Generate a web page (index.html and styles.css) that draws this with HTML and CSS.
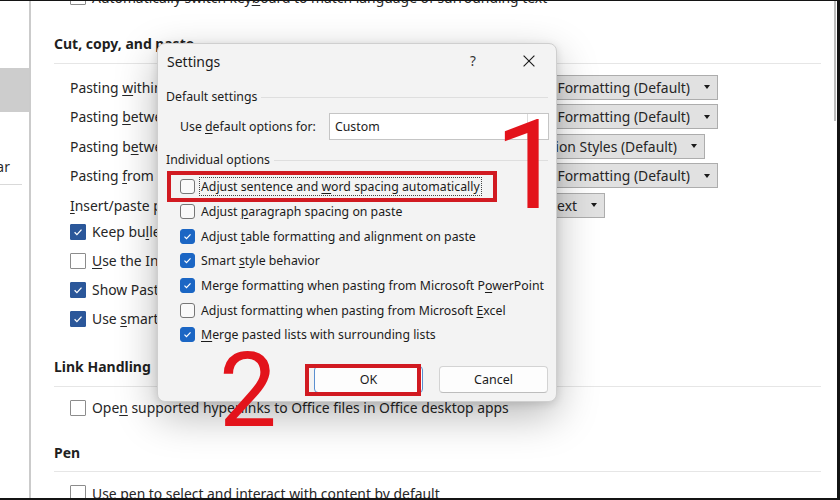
FILE: index.html
```html
<!DOCTYPE html>
<html lang="en">
<head>
<meta charset="utf-8">
<title>Word Options - Advanced</title>
<link rel="stylesheet" href="styles.css">
</head>
<body>
<div class="screen">
  <nav class="nav">
    <div class="nav-list">
      <div class="nav-item">Language</div>
      <div class="nav-item">Accessibility</div>
      <div class="nav-item is-selected">Advanced</div>
      <div class="nav-item">Customize Ribbon</div>
      <div class="nav-item">Quick Access Toolbar</div>
      <div class="nav-sep"></div>
      <div class="nav-item">Add-ins</div>
      <div class="nav-item">Trust Center</div>
    </div>
  </nav>

  <main class="pane">
    <div class="pane-body">
      <div class="check-row"><span class="cb"></span><span class="check-text">Automatically switch key<u>b</u>oard to match language of surrounding text</span></div>

      <section class="sec sec-cut">
        <h2 class="sec-title">Cut, copy, and paste</h2>
        <div class="sec-body sec-body-dd">
          <div class="dd-row"><span class="dd-label">Pasting <u>w</u>ithin the same document:</span><span class="dd dd-wide"><span>Keep Source Formatting (Default)</span><span class="dd-arrow"></span></span></div>
          <div class="dd-row"><span class="dd-label">Pasting <u>b</u>etween documents:</span><span class="dd dd-wide"><span>Keep Source Formatting (Default)</span><span class="dd-arrow"></span></span></div>
          <div class="dd-row"><span class="dd-label">Pasting b<u>e</u>tween documents when style definitions conflict:</span><span class="dd dd-mid"><span>Use Destination Styles (Default)</span><span class="dd-arrow"></span></span></div>
          <div class="dd-row"><span class="dd-label">Pasting <u>f</u>rom other programs:</span><span class="dd dd-wide"><span>Keep Source Formatting (Default)</span><span class="dd-arrow"></span></span></div>
          <div class="dd-row"><span class="dd-label"><u>I</u>nsert/paste pictures as:</span><span class="dd dd-narrow"><span>In line with text</span><span class="dd-arrow"></span></span></div>
          <div class="check-list">
            <div class="check-row"><span class="cb on"><svg viewBox="0 0 12 12"><path d="M2.6 6.3l2.3 2.3 4.6-5" /></svg></span><span class="check-text clip">Keep bu<u>l</u>lets and numbers when pasting text with Keep Text Only option</span></div>
            <div class="check-row"><span class="cb"></span><span class="check-text"><u>U</u>se the Insert key for paste</span></div>
            <div class="check-row"><span class="cb on"><svg viewBox="0 0 12 12"><path d="M2.6 6.3l2.3 2.3 4.6-5" /></svg></span><span class="check-text">Show Paste <u>O</u>ptions button when content is pasted</span></div>
            <div class="check-row"><span class="cb on"><svg viewBox="0 0 12 12"><path d="M2.6 6.3l2.3 2.3 4.6-5" /></svg></span><span class="check-text">Use <u>s</u>mart cut and paste</span><span class="btn-small">Settings...</span></div>
          </div>
        </div>
      </section>

      <section class="sec sec-link">
        <h2 class="sec-title">Link Handling</h2>
        <div class="sec-body">
          <div class="check-row"><span class="cb"></span><span class="check-text">Ope<u>n</u> supported hyperlinks to Office files in Office desktop apps</span></div>
        </div>
      </section>

      <section class="sec sec-pen">
        <h2 class="sec-title">Pen</h2>
        <div class="sec-body">
          <div class="check-row"><span class="cb"></span><span class="check-text">Use pen to select and interact with content by default</span></div>
        </div>
      </section>
    </div>
  </main>

  <div class="scrollbar"><div class="scroll-thumb"></div></div>

  <div class="dialog" role="dialog" aria-label="Settings">
    <div class="dlg-titlebar">
      <span class="dlg-title">Settings</span>
      <span class="dlg-help">?</span>
      <span class="dlg-close"><svg width="12" height="12" viewBox="0 0 12 12"><path d="M.6.6l10.8 10.8M11.4.6L.6 11.4" /></svg></span>
    </div>
    <div class="dlg-body">
      <div class="group-label">Default settings</div>
      <div class="combo-row">
        <span>Use <u>d</u>efault options for:</span>
        <span class="combo"><span class="combo-text">Custom</span><span class="combo-btn"></span></span>
      </div>
      <div class="group-label group-label-2">Individual options</div>
      <div class="opt-list">
        <div class="opt"><span class="dcb"></span><span class="focus-ring">Adjust sentence and <u>w</u>ord spacing automatically</span></div>
        <div class="opt"><span class="dcb"></span><span>Adjust <u>p</u>aragraph spacing on paste</span></div>
        <div class="opt"><span class="dcb on"><svg viewBox="0 0 12 12"><path d="M2.7 6.2l2.2 2.2 4.4-4.8" /></svg></span><span>Adjust <u>t</u>able formatting and alignment on paste</span></div>
        <div class="opt"><span class="dcb on"><svg viewBox="0 0 12 12"><path d="M2.7 6.2l2.2 2.2 4.4-4.8" /></svg></span><span>Smart <u>s</u>tyle behavior</span></div>
        <div class="opt"><span class="dcb on"><svg viewBox="0 0 12 12"><path d="M2.7 6.2l2.2 2.2 4.4-4.8" /></svg></span><span>Merge formatting when pasting from Microsoft P<u>o</u>werPoint</span></div>
        <div class="opt"><span class="dcb"></span><span>Adjust formatting when pasting from Microsoft <u>E</u>xcel</span></div>
        <div class="opt"><span class="dcb on"><svg viewBox="0 0 12 12"><path d="M2.7 6.2l2.2 2.2 4.4-4.8" /></svg></span><span><u>M</u>erge pasted lists with surrounding lists</span></div>
      </div>
      <div class="dlg-actions">
        <button class="btn btn-default" type="button">OK</button>
        <button class="btn" type="button">Cancel</button>
      </div>
    </div>
  </div>

  <div class="anno-box anno-box-1"></div>
  <div class="anno-box anno-box-2"></div>
  <div class="anno-num anno-num-1">1</div>
  <div class="anno-num anno-num-2">2</div>
</div>
</body>
</html>
```

FILE: styles.css
```css
html, body {
  margin: 0;
  padding: 0;
  background: #fff;
}

.screen {
  width: 840px;
  height: 500px;
  box-sizing: border-box;
  border-top: 1px solid #141414;
  border-right: 3px solid #141414;
  border-bottom: 2px solid #141414;
  display: flex;
  position: relative;
  overflow: hidden;
  background: #fff;
  font-family: "Noto Sans", "Liberation Sans", sans-serif;
  font-size: 13.9px;
  color: #262626;
}

u { text-decoration-thickness: 1px; text-underline-offset: 2px; }

/* left navigation */
.nav {
  width: 29px;
  flex-shrink: 0;
  border-right: 2px solid #cbcbcb;
  overflow: hidden;
}
.nav-list {
  margin-left: -127px;
  margin-top: -5px;
  width: calc(100% + 127px);
}
.nav-item {
  height: 36px;
  display: flex;
  align-items: center;
  white-space: nowrap;
  color: #2b2b2b;
}
.nav-item.is-selected {
  height: 44px;
  background: #cdcdcd;
}
.nav-sep {
  width: 149px;
  height: 1px;
  background: #d9d9d9;
}

/* main pane */
.pane {
  flex: 1;
  overflow: hidden;
}
.pane-body {
  margin-top: -18.5px;
  padding: 0 10px 0 23px;
}

.check-row {
  height: 29px;
  display: flex;
  align-items: center;
  padding-left: 16px;
  white-space: nowrap;
}
.check-text.clip {
  max-width: 440px;
  overflow: hidden;
}
.cb {
  width: 16px;
  height: 16px;
  box-sizing: border-box;
  border: 1px solid #8c8c8c;
  border-radius: 1px;
  background: #fff;
  margin-right: 6px;
  flex-shrink: 0;
  display: flex;
  align-items: center;
  justify-content: center;
}
.cb.on {
  background: #2b579a;
  border-color: #2b579a;
}
.cb svg { width: 12px; height: 12px; }
.cb path, .dcb path {
  fill: none;
  stroke: #fff;
  stroke-width: 1.3;
}

.btn-small {
  margin-left: 14px;
  height: 22px;
  padding: 0 10px;
  display: inline-flex;
  align-items: center;
  border: 1px solid #adadad;
  background: #e1e1e1;
}

.sec-title {
  margin: 0;
  font-size: 14px;
  font-weight: 700;
  line-height: 20px;
  padding-bottom: 8.5px;
  border-bottom: 1px solid #e6e6e6;
  color: #1f1f1f;
}
.sec-cut .sec-title { margin-top: 22.5px; }
.sec-link .sec-title { margin-top: 24px; }
.sec-pen .sec-title { margin-top: 20.6px; }

.sec-body { padding-top: 6.5px; }
.sec-body-dd { padding-top: 8.75px; }

.dd-row {
  height: 29.5px;
  display: flex;
  align-items: center;
  padding-left: 16px;
}
.dd-label {
  width: 408px;
  flex-shrink: 0;
  white-space: nowrap;
  overflow: hidden;
}
.dd {
  height: 25px;
  box-sizing: border-box;
  border: 1px solid #adadad;
  background: #e1e1e1;
  display: flex;
  align-items: center;
  justify-content: flex-end;
  padding-right: 7px;
  overflow: hidden;
  white-space: nowrap;
  color: #262626;
}
.dd-wide { width: 240px; }
.dd-mid { width: 227px; }
.dd-narrow { width: 127px; }
.dd-arrow {
  width: 0;
  height: 0;
  border-left: 3.5px solid transparent;
  border-right: 3.5px solid transparent;
  border-top: 4px solid #1a1a1a;
  margin-left: 14px;
  flex-shrink: 0;
}

.check-list { margin-top: -2.5px; }

/* scrollbar */
.scrollbar {
  width: 6px;
  flex-shrink: 0;
}
.scroll-thumb {
  margin-left: 3px;
  width: 2px;
  height: 120px;
  background: #bdbdbd;
}

/* dialog */
.dialog {
  position: absolute;
  left: 157px;
  top: 42px;
  width: 400px;
  height: 359px;
  box-sizing: border-box;
  border: 1px solid #cfcfcf;
  border-radius: 8px;
  background: #f3f3f3;
  box-shadow: 0 14px 42px rgba(0, 0, 0, 0.28), 0 2px 8px rgba(0, 0, 0, 0.12);
  font-size: 12.3px;
  color: #1b1b1b;
}
.dlg-titlebar {
  height: 34px;
  display: flex;
  align-items: center;
  padding: 0 4px 0 9px;
}
.dlg-title {
  flex: 1;
  font-size: 14px;
}
.dlg-help {
  width: 46px;
  margin-right: 10px;
  text-align: center;
  font-size: 13.5px;
  color: #333;
}
.dlg-close {
  width: 46px;
  display: flex;
  justify-content: center;
}
.dlg-close path {
  stroke: #1b1b1b;
  stroke-width: 1.15;
  fill: none;
}

.dlg-body { padding: 0 8px; }

.group-label {
  display: flex;
  align-items: center;
  line-height: 20px;
  margin-top: 9px;
}
.group-label::after {
  content: "";
  flex: 1;
  height: 1px;
  background: #dedede;
  margin-left: 4px;
}
.group-label-2 { margin-top: 10px; }

.combo-row {
  margin-top: 6px;
  margin-right: -1px;
  height: 27px;
  display: flex;
  align-items: center;
  justify-content: space-between;
  padding-left: 14px;
}
.combo {
  width: 220px;
  height: 27px;
  box-sizing: border-box;
  border: 1px solid #c5c5c5;
  background: #fff;
  display: flex;
  align-items: center;
}
.combo-text {
  flex: 1;
  padding-left: 5px;
}
.combo-btn {
  width: 20px;
  height: 100%;
  border-left: 1px solid #dcdcdc;
}

.opt-list { margin-top: 4.4px; }
.opt {
  height: 24.67px;
  display: flex;
  align-items: center;
  padding-left: 14px;
  white-space: nowrap;
}
.dcb {
  width: 15px;
  height: 15px;
  box-sizing: border-box;
  border: 1px solid #767676;
  border-radius: 3px;
  background: #f9f9f9;
  margin-right: 6px;
  flex-shrink: 0;
  display: flex;
  align-items: center;
  justify-content: center;
}
.dcb.on {
  background: #1b66c4;
  border-color: #1b66c4;
}
.dcb svg { width: 11px; height: 11px; }
.focus-ring {
  margin-left: -2px;
  padding: 0 1px;
  line-height: 17px;
  border: 1px dotted #444;
}

.dlg-actions {
  margin-top: 18.6px;
  display: flex;
  justify-content: flex-end;
  gap: 16px;
}
.btn {
  box-sizing: border-box;
  width: 109px;
  height: 27px;
  border: 1px solid #d3d3d3;
  border-bottom-color: #bdbdbd;
  border-radius: 4px;
  background: #fdfdfd;
  font: inherit;
  font-size: 12.5px;
  color: #1b1b1b;
  padding: 0;
}
.btn-default {
  border-color: #5a8fd0;
}

/* annotations */
.anno-box {
  position: absolute;
  box-sizing: border-box;
  border: 4px solid #d11a21;
}
.anno-box-1 { left: 167px; top: 170px; width: 330px; height: 31px; }
.anno-box-2 { left: 305px; top: 363px; width: 116px; height: 32px; }

.anno-num {
  position: absolute;
  font-family: Roboto, "Liberation Sans", sans-serif;
  font-weight: 400;
  color: #e3131b;
  line-height: 1;
}
.anno-num-1 { left: 494.4px; top: 102.6px; font-size: 124px; }
.anno-num-2 { left: 219px; top: 338px; font-size: 103px; }
```
